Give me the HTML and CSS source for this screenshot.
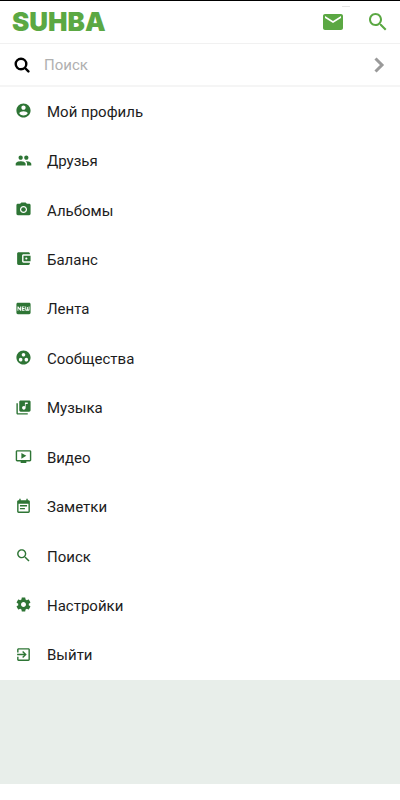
FILE: index.html
```html
<!DOCTYPE html>
<html lang="ru">
<head>
    <meta charset="UTF-8">
    <meta name="viewport" content="width=device-width, initial-scale=1.0">
    <title>SUHBA</title>
    <link rel="stylesheet" href="styles.css">
</head>
<body>
    <header class="header">
        <a href="#" class="logo">SUHBA</a>
        <div class="header-buttons">
            <button type="button" aria-label="Сообщения">
                <svg viewBox="0 0 24 24"><path d="M20 4H4c-1.1 0-1.99.9-1.99 2L2 18c0 1.1.9 2 2 2h16c1.1 0 2-.9 2-2V6c0-1.1-.9-2-2-2zm0 4l-8 5-8-5V6l8 5 8-5v2z"/></svg>
                <span class="badge"></span>
            </button>
            <button type="button" aria-label="Поиск">
                <svg viewBox="0 0 24 24"><path d="M15.5 14h-.79l-.28-.27C15.41 12.59 16 11.11 16 9.5 16 5.91 13.09 3 9.5 3S3 5.91 3 9.5 5.91 16 9.5 16c1.61 0 3.09-.59 4.23-1.57l.27.28v.79l5 4.99L20.49 19l-4.99-5zm-6 0C7.01 14 5 11.99 5 9.5S7.01 5 9.5 5 14 7.01 14 9.5 11.99 14 9.5 14z"/></svg>
            </button>
        </div>
    </header>

    <form class="search">
        <label for="search">
            <svg class="search-icon" viewBox="0 0 16 16"><circle cx="7" cy="7" r="5.3"/><path d="M11 11l3.400 3.400"/></svg>
        </label>
        <input type="text" id="search" placeholder="Поиск" aria-label="Поиск">
        <button type="submit" aria-label="Найти">
            <svg class="arrow-icon" viewBox="0 0 12 18"><path d="M2.5 2.5L9 9l-6.5 6.5"/></svg>
        </button>
    </form>

    <nav class="menu">
        <a href="#">
            <svg viewBox="0 0 24 24"><path d="M12 2C6.48 2 2 6.48 2 12s4.48 10 10 10 10-4.48 10-10S17.52 2 12 2zm0 3c1.66 0 3 1.34 3 3s-1.34 3-3 3-3-1.34-3-3 1.34-3 3-3zm0 14.2c-2.5 0-4.71-1.28-6-3.22.03-1.99 4-3.08 6-3.08 1.99 0 5.97 1.09 6 3.08-1.29 1.94-3.5 3.22-6 3.22z"/></svg>
            <span>Мой профиль</span>
        </a>
        <a href="#">
            <svg viewBox="0 0 24 24"><path d="M16 11c1.66 0 2.99-1.34 2.99-3S17.66 5 16 5c-1.66 0-3 1.34-3 3s1.34 3 3 3zm-8 0c1.66 0 2.99-1.34 2.99-3S9.66 5 8 5C6.34 5 5 6.34 5 8s1.34 3 3 3zm0 2c-2.33 0-7 1.17-7 3.5V19h14v-2.5c0-2.33-4.67-3.5-7-3.5zm8 0c-.29 0-.62.02-.97.05 1.16.84 1.97 1.97 1.97 3.45V19h6v-2.5c0-2.33-4.67-3.5-7-3.5z"/></svg>
            <span>Друзья</span>
        </a>
        <a href="#">
            <svg viewBox="0 0 24 24"><circle cx="12" cy="12" r="3.2"/><path d="M9 2L7.17 4H4c-1.1 0-2 .9-2 2v12c0 1.1.9 2 2 2h16c1.1 0 2-.9 2-2V6c0-1.1-.9-2-2-2h-3.17L15 2H9zm3 15c-2.76 0-5-2.24-5-5s2.24-5 5-5 5 2.24 5 5-2.24 5-5 5z"/></svg>
            <span>Альбомы</span>
        </a>
        <a href="#">
            <svg viewBox="0 0 24 24"><path d="M21 18v1c0 1.1-.9 2-2 2H5c-1.11 0-2-.9-2-2V5c0-1.1.89-2 2-2h14c1.1 0 2 .9 2 2v1h-9c-1.11 0-2 .9-2 2v8c0 1.1.89 2 2 2h9zm-9-2h10V8H12v8zm4-2.5c-.83 0-1.5-.67-1.5-1.5s.67-1.5 1.5-1.5 1.5.67 1.5 1.5-.67 1.5-1.5 1.5z"/></svg>
            <span>Баланс</span>
        </a>
        <a href="#">
            <svg viewBox="0 0 24 24"><path d="M20 4H4c-1.11 0-1.99.89-1.99 2L2 18c0 1.11.89 2 2 2h16c1.11 0 2-.89 2-2V6c0-1.11-.89-2-2-2zM8.5 15H7.3l-2.55-3.5V15H3.5V9h1.25l2.5 3.5V9H8.5v6zm5-4.74H11v1.12h2.5v1.26H11v1.11h2.5V15h-4V9h4v1.26zm7 3.74c0 .55-.45 1-1 1h-4c-.55 0-1-.45-1-1V9h1.25v4.51h1.13V9.99h1.25v3.51h1.12V9h1.25v5z"/></svg>
            <span>Лента</span>
        </a>
        <a href="#">
            <svg viewBox="0 0 24 24"><path d="M12 2C6.48 2 2 6.48 2 12s4.48 10 10 10 10-4.48 10-10S17.52 2 12 2zM8 17.5c-1.38 0-2.5-1.12-2.5-2.5s1.12-2.5 2.5-2.5 2.5 1.12 2.5 2.5-1.12 2.5-2.5 2.5zM9.5 8c0-1.38 1.12-2.5 2.5-2.5s2.5 1.12 2.5 2.5-1.12 2.5-2.5 2.5S9.5 9.38 9.5 8zm6.5 9.5c-1.38 0-2.5-1.12-2.5-2.5s1.12-2.5 2.5-2.5 2.5 1.12 2.5 2.5-1.12 2.5-2.5 2.5z"/></svg>
            <span>Сообщества</span>
        </a>
        <a href="#">
            <svg viewBox="0 0 24 24"><path d="M20 2H8c-1.1 0-2 .9-2 2v12c0 1.1.9 2 2 2h12c1.1 0 2-.9 2-2V4c0-1.1-.9-2-2-2zm-2 5h-3v5.5c0 1.38-1.12 2.5-2.5 2.5S10 13.88 10 12.5s1.12-2.5 2.5-2.5c.57 0 1.08.19 1.5.51V5h4v2zM4 6H2v14c0 1.1.9 2 2 2h14v-2H4V6z"/></svg>
            <span>Музыка</span>
        </a>
        <a href="#">
            <svg viewBox="0 0 24 24"><path d="M21 3H3c-1.11 0-2 .89-2 2v12c0 1.1.89 2 2 2h5v2h8v-2h5c1.1 0 1.99-.9 1.99-2L23 5c0-1.11-.9-2-2-2zm0 14H3V5h18v12zm-5-6l-7 4V7z"/></svg>
            <span>Видео</span>
        </a>
        <a href="#">
            <svg viewBox="0 0 24 24"><path d="M17 10H7v2h10v-2zm2-7h-1V1h-2v2H8V1H6v2H5c-1.11 0-1.99.9-1.99 2L3 19c0 1.1.89 2 2 2h14c1.1 0 2-.9 2-2V5c0-1.1-.9-2-2-2zm0 16H5V8h14v11zm-5-5H7v2h7v-2z"/></svg>
            <span>Заметки</span>
        </a>
        <a href="#">
            <svg viewBox="0 0 24 24"><path d="M15.5 14h-.79l-.28-.27C15.41 12.59 16 11.11 16 9.5 16 5.91 13.09 3 9.5 3S3 5.91 3 9.5 5.91 16 9.5 16c1.61 0 3.09-.59 4.23-1.57l.27.28v.79l5 4.99L20.49 19l-4.99-5zm-6 0C7.01 14 5 11.99 5 9.5S7.01 5 9.5 5 14 7.01 14 9.5 11.99 14 9.5 14z"/></svg>
            <span>Поиск</span>
        </a>
        <a href="#">
            <svg viewBox="0 0 24 24"><path d="M19.43 12.98c.04-.32.07-.64.07-.98s-.03-.66-.07-.98l2.11-1.65c.19-.15.24-.42.12-.64l-2-3.46c-.12-.22-.39-.3-.61-.22l-2.49 1c-.52-.4-1.08-.73-1.69-.98l-.38-2.65C14.46 2.18 14.25 2 14 2h-4c-.25 0-.46.18-.49.42l-.38 2.65c-.61.25-1.17.59-1.69.98l-2.49-1c-.23-.09-.49 0-.61.22l-2 3.46c-.13.22-.07.49.12.64l2.11 1.65c-.04.32-.07.65-.07.98s.03.66.07.98l-2.11 1.65c-.19.15-.24.42-.12.64l2 3.46c.12.22.39.3.61.22l2.49-1c.52.4 1.08.73 1.69.98l.38 2.65c.03.24.24.42.49.42h4c.25 0 .46-.18.49-.42l.38-2.65c.61-.25 1.17-.59 1.69-.98l2.49 1c.23.09.49 0 .61-.22l2-3.46c.12-.22.07-.49-.12-.64l-2.11-1.65zM12 15.5c-1.93 0-3.5-1.57-3.5-3.5s1.57-3.5 3.5-3.5 3.5 1.57 3.5 3.5-1.57 3.5-3.5 3.5z"/></svg>
            <span>Настройки</span>
        </a>
        <a href="#">
            <svg viewBox="0 0 24 24"><path d="M10.09 15.59L11.5 17l5-5-5-5-1.41 1.41L12.67 11H3v2h9.67l-2.58 2.59zM19 3H5c-1.11 0-2 .9-2 2v4h2V5h14v14H5v-4H3v4c0 1.1.89 2 2 2h14c1.1 0 2-.9 2-2V5c0-1.1-.9-2-2-2z"/></svg>
            <span>Выйти</span>
        </a>
    </nav>

    <div class="page-bottom"></div>
</body>
</html>
```
FILE: styles.css
```css
* {
    box-sizing: border-box;
}
body {
    font-family: Roboto, Arial, sans-serif;
    font-size: 15px;
    background-color: #fff;
    color: #1c1c1c;
    margin: 0;
    padding-bottom: 16px;
    min-height: 100vh;
    display: flex;
    flex-direction: column;
    border-top: 1px solid #000;
}
button {
    display: flex;
    background: none;
    border: none;
    padding: 0;
    cursor: pointer;
}
svg {
    display: block;
    fill: currentColor;
}

/* Header */
.header {
    display: flex;
    justify-content: space-between;
    align-items: center;
    height: 43px;
    padding: 0 10px 0 12px;
    border-bottom: 1px solid #f1f1f1;
}
.logo {
    font-family: Inter, Arial, sans-serif;
    font-size: 26px;
    font-weight: 900;
    line-height: 42px;
    color: #5ba843;
    text-decoration: none;
}
.header-buttons {
    display: flex;
    gap: 21px;
}
.header-buttons button {
    position: relative;
    color: #5ba843;
}
.header-buttons svg {
    width: 24px;
    height: 24px;
}
.badge {
    position: absolute;
    top: -4px;
    right: -5px;
    width: 8px;
    height: 1px;
    background-color: #e4e4e4;
}

/* Search */
.search {
    display: flex;
    align-items: center;
    height: 43px;
    padding: 0 15px 0 14px;
    border-bottom: 2px solid #f5f5f5;
}
.search input {
    flex: 1;
    min-width: 0;
    border: none;
    outline: none;
    padding: 0 14px;
    font-family: inherit;
    font-size: 15px;
    background: none;
}
.search input::placeholder {
    color: #b0b0b0;
}
.search button {
    color: #9a9a9a;
}
.search-icon {
    width: 16px;
    height: 16px;
    fill: none;
    stroke: #000;
    stroke-width: 2.4;
    stroke-linecap: round;
}
.arrow-icon {
    width: 12px;
    height: 18px;
    fill: none;
    stroke: currentColor;
    stroke-width: 3;
}

/* Menu */
.menu {
    flex: 1;
    display: flex;
    flex-direction: column;
}
.menu a {
    flex: 1;
    display: flex;
    align-items: center;
    gap: 15px;
    min-height: 40px;
    padding: 0 15px;
    color: #1c1c1c;
    text-decoration: none;
}
.menu svg {
    width: 17px;
    height: 17px;
    margin-bottom: 2px;
    color: #2e7535;
}

.page-bottom {
    height: 104px;
    background-color: #e8eeea;
}
```
